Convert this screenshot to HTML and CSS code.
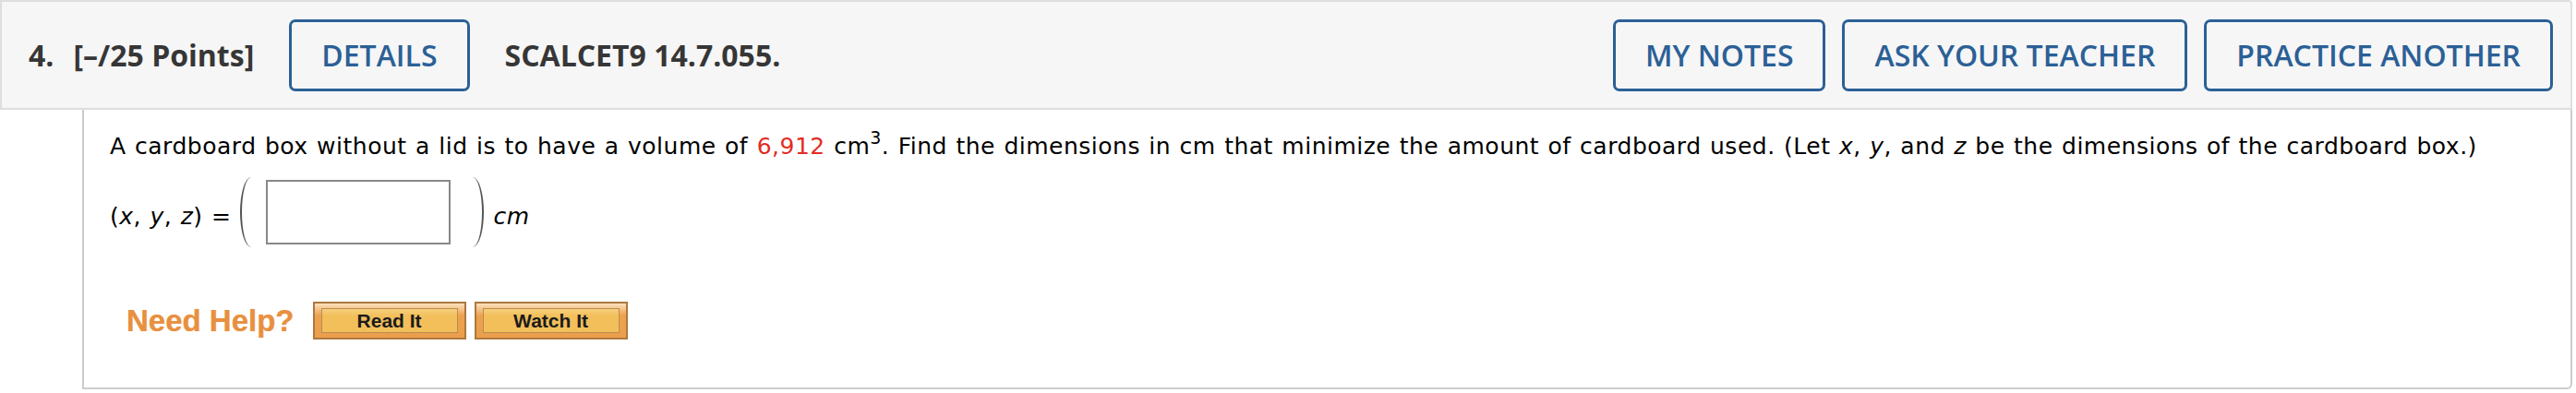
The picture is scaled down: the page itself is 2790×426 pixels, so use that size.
FILE: index.html
```html
<!DOCTYPE html>
<html lang="en">
<head>
<meta charset="utf-8">
<title>Question 4</title>
<link rel="stylesheet" href="styles.css">
</head>
<body>
<div class="question">
  <div class="qheader">
    <span class="qnum">4.</span>
    <span class="qpoints">[–/25 Points]</span>
    <button class="hbtn">DETAILS</button>
    <span class="qcode">SCALCET9 14.7.055.</span>
    <div class="hspacer"></div>
    <div class="hright">
      <button class="hbtn">MY NOTES</button>
      <button class="hbtn">ASK YOUR TEACHER</button>
      <button class="hbtn">PRACTICE ANOTHER</button>
    </div>
  </div>
  <div class="qbody">
    <p class="qtext">A cardboard box without a lid is to have a volume of <span class="red">6,912</span> cm<sup>3</sup>. Find the dimensions in cm that minimize the amount of cardboard used. (Let <i>x</i>, <i>y</i>, and <i>z</i> be the dimensions of the cardboard box.)</p>
    <div class="answer">
      <span class="lhs">(<i>x</i>, <i>y</i>, <i>z</i>) =</span>
      <span class="paren paren-l"></span>
      <span class="inbox"></span>
      <span class="paren paren-r"></span>
      <span class="unit">cm</span>
    </div>
    <div class="help">
      <span class="needhelp">Need Help?</span>
      <button class="hlpbtn"><span class="hlpin">Read It</span></button>
      <button class="hlpbtn"><span class="hlpin">Watch It</span></button>
    </div>
  </div>
</div>
</body>
</html>
```
FILE: styles.css
```css
html, body {
  margin: 0;
  padding: 0;
  background: #ffffff;
}

.question {
  width: 2786px;
}

.qheader {
  display: flex;
  align-items: center;
  height: 115px;
  padding: 0 19px 0 29px;
  background: #f6f6f6;
  border: 2px solid #dedede;
  border-radius: 0 4px 0 0;
  font-family: "Open Sans", sans-serif;
  font-size: 32px;
  color: #363636;
}

.qnum {
  font-weight: 700;
  margin-right: 21px;
}

.qpoints {
  font-weight: 700;
  margin-right: 38px;
}

.qcode {
  font-weight: 700;
  margin-left: 38px;
}

.hspacer {
  flex: 1;
}

.hright {
  display: flex;
  gap: 18px;
}

.hbtn {
  height: 78px;
  padding: 0 32px;
  border: 3px solid #2b6096;
  border-radius: 7px;
  background: #f6f6f6;
  color: #2b6096;
  font-family: "Open Sans", sans-serif;
  font-size: 32px;
  font-weight: 600;
  line-height: 1;
}

.qbody {
  margin-left: 89px;
  padding: 24px 0 52px 28px;
  border: 2px solid #cccccc;
  border-top: none;
  border-radius: 0 0 6px 0;
  font-family: "DejaVu Sans", Verdana, sans-serif;
  font-size: 25px;
  letter-spacing: 0.5px;
  word-spacing: 1px;
  color: #000;
}

.qtext {
  margin: 0;
  line-height: 32px;
}

.qtext sup {
  font-size: 19px;
  line-height: 0;
  vertical-align: 11px;
}

.red {
  color: #e32b22;
}

.answer {
  display: flex;
  align-items: center;
  height: 80px;
  margin-top: 15px;
}

.lhs {
  margin-right: 10px;
  padding-top: 8px;
}

.paren {
  width: 22px;
  height: 76px;
  border-radius: 50%;
  border: 0 solid #555;
}

.paren-l {
  border-left-width: 2px;
  margin-right: 4px;
}

.paren-r {
  border-right-width: 2px;
  margin-left: 12px;
  margin-right: 10px;
}

.inbox {
  width: 196px;
  height: 66px;
  border: 2px solid #888;
  background: #fff;
}

.unit {
  font-style: italic;
  padding-top: 8px;
}

.help {
  display: flex;
  align-items: center;
  height: 41px;
  margin-top: 57px;
  padding-left: 18px;
}

.needhelp {
  font-family: "Liberation Sans", Arial, sans-serif;
  font-weight: 700;
  font-size: 33px;
  letter-spacing: 0;
  word-spacing: 0;
  color: #e8903f;
  margin-right: 20px;
  text-shadow: 0 0 1px rgba(232, 144, 63, 0.6);
}

.hlpbtn {
  width: 166px;
  height: 41px;
  padding: 5px 7px;
  margin-right: 9px;
  border: 2px solid #ad783e;
  background: linear-gradient(#fbe1bd, #eda24f 35%, #eb9f4c);
  display: flex;
}

.hlpin {
  flex: 1;
  display: flex;
  align-items: center;
  justify-content: center;
  border: 1px solid #b98c52;
  background: linear-gradient(#f6d07c, #f2bf5b 30%, #f2bf5b);
  font-family: "Liberation Sans", Arial, sans-serif;
  font-weight: 700;
  font-size: 21px;
  letter-spacing: 0;
  word-spacing: 0;
  color: #1b1b1b;
}
```
